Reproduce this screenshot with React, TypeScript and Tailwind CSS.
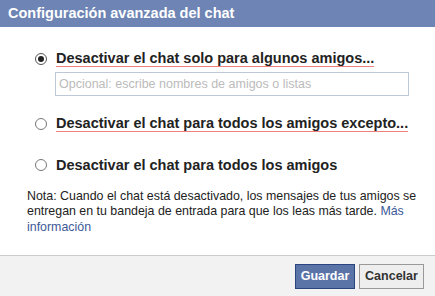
export default function App() {
  return (
    <div className="w-[435px] h-[296px] bg-white flex flex-col font-['Liberation_Sans',Arial,sans-serif] text-[#333]">
      <div className="h-[27px] bg-[#6d84b4] flex items-center px-[8px]">
        <h1 className="text-[14.5px] font-bold text-white leading-none">
          Configuración avanzada del chat
        </h1>
      </div>

      <div className="flex-1 pl-[35px] pr-[20px] pt-[23px]">
        <label className="flex items-center gap-[9px]">
          <span className="w-[12px] h-[12px] rounded-full border border-[#555] bg-white flex items-center justify-center">
            <span className="w-[6px] h-[6px] rounded-full bg-[#222]" />
          </span>
          <span className="text-[14.5px] font-bold text-[#222] border-b border-[#f08080] leading-[16px]">
            Desactivar el chat solo para algunos amigos...
          </span>
        </label>
        <div className="ml-[20px] mt-[5px] w-[354px] h-[24px] border border-[#bdc7d8] flex items-center px-[3px]">
          <span className="text-[12.5px] text-[#bbb]">
            Opcional: escribe nombres de amigos o listas
          </span>
        </div>

        <label className="flex items-center gap-[9px] mt-[19px]">
          <span className="w-[12px] h-[12px] rounded-full border border-[#777] bg-white" />
          <span className="text-[14.5px] font-bold text-[#222] border-b border-[#f08080] leading-[16px]">
            Desactivar el chat para todos los amigos excepto...
          </span>
        </label>

        <label className="flex items-center gap-[9px] mt-[25px]">
          <span className="w-[12px] h-[12px] rounded-full border border-[#777] bg-white" />
          <span className="text-[14.5px] font-bold text-[#222] leading-[16px]">
            Desactivar el chat para todos los amigos
          </span>
        </label>
      </div>

      <p className="pl-[27px] pr-[12px] text-[12.4px] leading-[15.5px] text-[#222] mb-[20px]">
        Nota: Cuando el chat está desactivado, los mensajes de tus amigos se
        entregan en tu bandeja de entrada para que los leas más tarde.{" "}
        <span className="text-[#3b5998]">Más información</span>
      </p>

      <div className="h-[41px] border-t border-[#ccc] bg-[#f2f2f2] flex items-center justify-end gap-[4px] pr-[11px]">
        <button className="w-[60px] h-[25px] bg-[#5b74a8] border border-[#29447e] text-white text-[12.5px] font-bold">
          Guardar
        </button>
        <button className="w-[65px] h-[25px] bg-[#eeeeee] border border-[#999] text-[#333] text-[12.5px] font-bold">
          Cancelar
        </button>
      </div>
    </div>
  );
}
